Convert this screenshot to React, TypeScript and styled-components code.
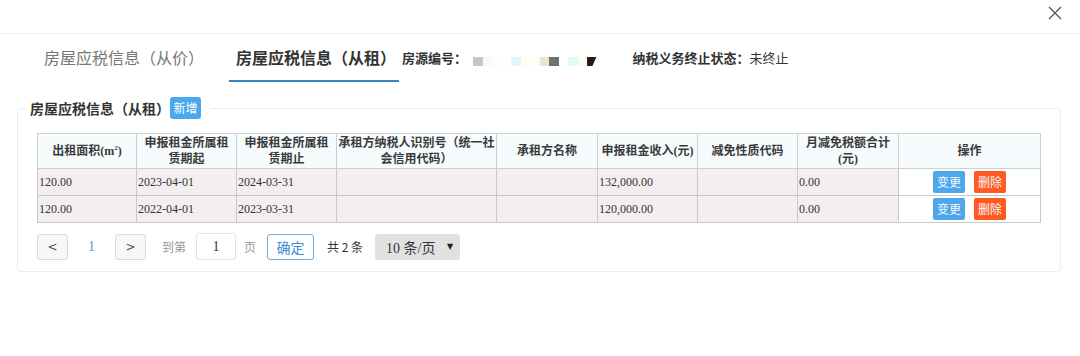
import React from 'react';
import styled, { createGlobalStyle } from 'styled-components';

const GlobalStyle = createGlobalStyle`
  html, body {
    margin: 0;
    padding: 0;
    background: #ffffff;
  }
  body {
    font-family: "Noto Sans CJK SC", "Noto Sans", sans-serif;
    color: #333;
  }
  * {
    box-sizing: border-box;
  }
`;

const Page = styled.div`
  width: 1080px;
  height: 356px;
  background: #fff;
  overflow: hidden;
`;

const TopBar = styled.div`
  height: 34px;
  border-bottom: 1px solid #ececec;
  display: flex;
  justify-content: flex-end;
  align-items: flex-start;
  padding: 6px 18px 0 0;
`;

const CloseButton = styled.button`
  width: 14px;
  height: 14px;
  padding: 0;
  border: none;
  background: transparent;
  cursor: pointer;
  display: flex;

  svg {
    width: 14px;
    height: 14px;
  }
`;

const TabRow = styled.div`
  display: flex;
  align-items: center;
  height: 48px;
  padding-left: 39px;
`;

const Tab = styled.div<{ $active?: boolean }>`
  height: 100%;
  display: flex;
  align-items: center;
  padding: ${(p) => (p.$active ? '0 3px 0 7px' : '0 5px')};
  margin-right: ${(p) => (p.$active ? '0' : '20px')};
  font-size: 16px;
  line-height: 20px;
  font-weight: ${(p) => (p.$active ? 700 : 400)};
  color: ${(p) => (p.$active ? '#333' : '#777')};
  border-bottom: 2px solid ${(p) => (p.$active ? '#3a84b5' : 'transparent')};
  cursor: pointer;
`;

const InfoLabel = styled.span`
  font-size: 13px;
  line-height: 18px;
  font-weight: 700;
  color: #333;
  margin-left: 3px;
`;

const Redacted = styled.div`
  display: flex;
  margin: 7px 0 0 6px;
`;

const Pixel = styled.span<{ $color: string; $cut?: boolean }>`
  width: 9.5px;
  height: 9.5px;
  background: ${(p) => p.$color};
  clip-path: ${(p) => (p.$cut ? 'polygon(0 0, 100% 0, 55% 100%, 0 100%)' : 'none')};
`;

const Status = styled.span`
  margin-left: 36px;
  font-size: 13px;
  line-height: 18px;
  color: #333;

  b {
    font-weight: 700;
  }
`;

const Panel = styled.fieldset`
  margin: 15px 19px 0 17px;
  border: 1px solid #ececec;
  border-radius: 4px;
  padding: 14px 19px 11px;
  min-width: 0;
`;

const Legend = styled.legend`
  display: flex;
  align-items: center;
  padding: 0 9px 0 3px;
  margin-left: -10px;
  font-size: 14px;
  line-height: 22px;
  font-weight: 700;
  color: #333;
`;

const AddButton = styled.button`
  width: 31px;
  height: 22px;
  padding: 0;
  border: none;
  border-radius: 3px;
  background: #4aa8ee;
  color: #fff;
  font-family: inherit;
  font-size: 12px;
  line-height: 22px;
  cursor: pointer;
`;

const Table = styled.table`
  width: 100%;
  table-layout: fixed;
  border-collapse: collapse;
  border: 1px solid #d6d6d6;
  font-family: "Liberation Serif", "Noto Sans CJK SC", serif;
`;

const HeadCell = styled.th`
  height: 35px;
  padding: 1px 0;
  background: #f6fbfe;
  border: 1px solid #cfcfcf;
  font-size: 12px;
  line-height: 16px;
  font-weight: 700;
  color: #3a3a3a;
  text-align: center;
  vertical-align: middle;
  white-space: nowrap;
  overflow: hidden;

  sup {
    font-size: 7px;
    line-height: 0;
  }
`;

const Cell = styled.td<{ $plain?: boolean }>`
  height: 27px;
  padding: 0 1px;
  background: ${(p) => (p.$plain ? '#ffffff' : '#f3eef0')};
  border: 1px solid #c9c9c9;
  font-size: 12px;
  line-height: 16px;
  color: #333;
  text-align: ${(p) => (p.$plain ? 'center' : 'left')};
  vertical-align: middle;
`;

const RowButton = styled.button<{ $danger?: boolean }>`
  width: 32px;
  height: 22px;
  padding: 0;
  border: none;
  border-radius: 2px;
  background: ${(p) => (p.$danger ? '#ff5a24' : '#4ea7ec')};
  color: #f4f8fc;
  font-family: "Noto Sans CJK SC", sans-serif;
  font-size: 12px;
  line-height: 22px;
  vertical-align: middle;
  margin-left: ${(p) => (p.$danger ? '9px' : '0')};
  cursor: pointer;
`;

const Pager = styled.div`
  display: flex;
  align-items: center;
  height: 27px;
  margin-top: 10px;
  font-size: 12px;
`;

const PagerButton = styled.button`
  width: 31px;
  height: 26px;
  padding: 0;
  border: 1px solid #dadada;
  border-radius: 3px;
  background: #f7f7f7;
  color: #555;
  font-family: "DejaVu Sans", sans-serif;
  font-size: 12px;
  cursor: pointer;
`;

const PageNumber = styled.span`
  width: 31px;
  margin: 0 8px;
  text-align: center;
  color: #4aa3df;
  font-family: "Liberation Serif", serif;
  font-size: 14px;
`;

const Muted = styled.span<{ $gap: number }>`
  margin-left: ${(p) => p.$gap}px;
  color: #999;
  font-size: 12px;
`;

const PageInput = styled.input`
  width: 40px;
  height: 27px;
  margin-left: 10px;
  border: 1px solid #e2e2e2;
  border-radius: 3px;
  text-align: center;
  font-family: "Liberation Serif", serif;
  font-size: 14px;
  color: #333;
  outline: none;
`;

const ConfirmButton = styled.button`
  width: 47px;
  height: 26px;
  margin-left: 11px;
  padding: 0;
  border: 1px solid #6aaedc;
  border-radius: 3px;
  background: #fff;
  color: #3b8fd0;
  font-family: inherit;
  font-size: 14px;
  cursor: pointer;
`;

const Total = styled.span`
  margin-left: 13px;
  font-size: 12px;
  color: #333;
`;

const SizeSelect = styled.div`
  width: 85px;
  height: 26px;
  margin-left: 12px;
  padding: 0 7px 0 11px;
  border-radius: 3px;
  background: #e1e1e1;
  display: flex;
  align-items: center;
  justify-content: space-between;
  font-family: "Liberation Serif", "Noto Sans CJK SC", serif;
  font-size: 14px;
  color: #333;

  span:last-child {
    font-family: "DejaVu Sans", sans-serif;
    font-size: 8px;
    color: #222;
  }
`;

const redactColors = [
  '#cdc5c5',
  '#f0fcfc',
  '#fefefb',
  '#fefefb',
  '#ddf9fb',
  '#fefef6',
  '#fdfdf3',
  '#f1e3d1',
  '#6e736f',
  '#ffffff',
  '#dcfbfb',
  '#fcfcf3',
];

const rows = [
  { area: '120.00', start: '2023-04-01', end: '2024-03-31', income: '132,000.00', relief: '0.00' },
  { area: '120.00', start: '2022-04-01', end: '2023-03-31', income: '120,000.00', relief: '0.00' },
];

const colWidths = [99, 100, 100, 160, 101, 100, 100, 101, 142];

export default function App() {
  return (
    <Page>
      <GlobalStyle />
      <TopBar>
        <CloseButton aria-label="关闭">
          <svg viewBox="0 0 14 14">
            <path d="M1 1L13 13M13 1L1 13" stroke="#555" strokeWidth="1.3" fill="none" />
          </svg>
        </CloseButton>
      </TopBar>

      <TabRow>
        <Tab>房屋应税信息（从价）</Tab>
        <Tab $active>房屋应税信息（从租）</Tab>
        <InfoLabel>房源编号：</InfoLabel>
        <Redacted>
          {redactColors.map((c, i) => (
            <Pixel key={i} $color={c} />
          ))}
          <Pixel $color="#2a1818" $cut />
        </Redacted>
        <Status>
          <b>纳税义务终止状态：</b>未终止
        </Status>
      </TabRow>

      <Panel>
        <Legend>
          房屋应税信息（从租）
          <AddButton>新增</AddButton>
        </Legend>
        <Table>
          <colgroup>
            {colWidths.map((w, i) => (
              <col key={i} style={{ width: w }} />
            ))}
          </colgroup>
          <thead>
            <tr>
              <HeadCell>
                出租面积(m<sup>2</sup>)
              </HeadCell>
              <HeadCell>
                申报租金所属租
                <br />
                赁期起
              </HeadCell>
              <HeadCell>
                申报租金所属租
                <br />
                赁期止
              </HeadCell>
              <HeadCell>
                承租方纳税人识别号（统一社
                <br />
                会信用代码）
              </HeadCell>
              <HeadCell>承租方名称</HeadCell>
              <HeadCell>申报租金收入(元)</HeadCell>
              <HeadCell>减免性质代码</HeadCell>
              <HeadCell>
                月减免税额合计
                <br />
                (元)
              </HeadCell>
              <HeadCell>操作</HeadCell>
            </tr>
          </thead>
          <tbody>
            {rows.map((r, i) => (
              <tr key={i}>
                <Cell>{r.area}</Cell>
                <Cell>{r.start}</Cell>
                <Cell>{r.end}</Cell>
                <Cell />
                <Cell />
                <Cell>{r.income}</Cell>
                <Cell />
                <Cell>{r.relief}</Cell>
                <Cell $plain>
                  <RowButton>变更</RowButton>
                  <RowButton $danger>删除</RowButton>
                </Cell>
              </tr>
            ))}
          </tbody>
        </Table>

        <Pager>
          <PagerButton>&lt;</PagerButton>
          <PageNumber>1</PageNumber>
          <PagerButton>&gt;</PagerButton>
          <Muted $gap={16}>到第</Muted>
          <PageInput defaultValue="1" />
          <Muted $gap={8}>页</Muted>
          <ConfirmButton>确定</ConfirmButton>
          <Total>共 2 条</Total>
          <SizeSelect>
            <span>10 条/页</span>
            <span>▼</span>
          </SizeSelect>
        </Pager>
      </Panel>
    </Page>
  );
}
